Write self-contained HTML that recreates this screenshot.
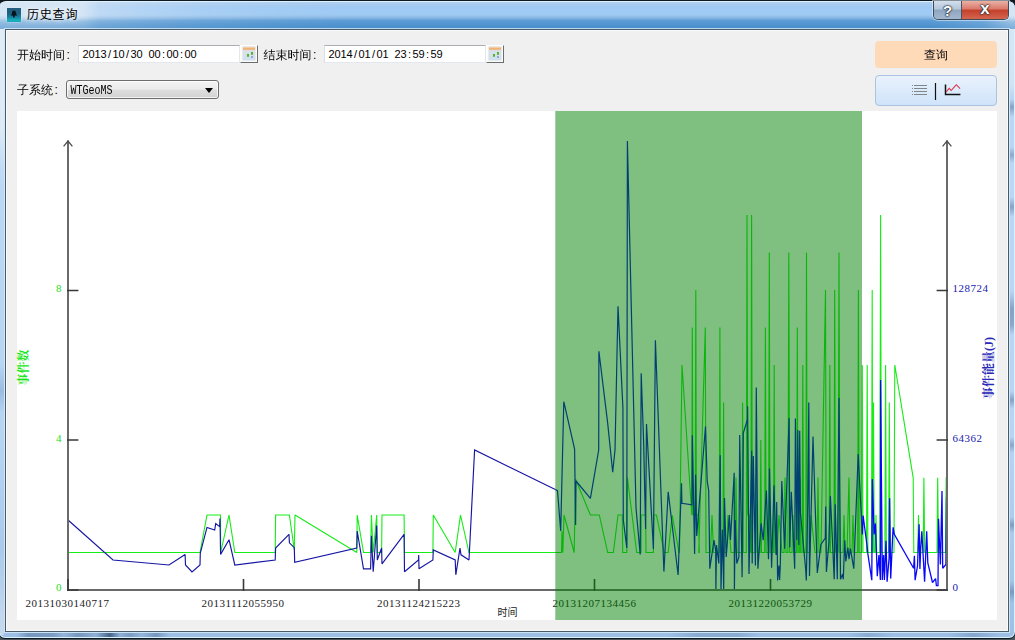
<!DOCTYPE html>
<html lang="zh-CN">
<head>
<meta charset="utf-8">
<title>历史查询</title>
<style>
html,body{margin:0;padding:0}
body{width:1015px;height:640px;position:relative;overflow:hidden;background:linear-gradient(180deg,#12181d 0,#1a2228 30%,#3c464d 97%,#4a545b 100%);font-family:"Liberation Sans","Noto Sans CJK SC",sans-serif;font-size:12px;color:#000}
.abs{position:absolute}
.win{position:absolute;left:-2px;top:0;width:1018px;height:639px;box-sizing:border-box;border:1px solid #0e1822;border-radius:8px 8px 7px 7px;
 background:linear-gradient(180deg,#b9d6f3 0,#b9d6f3 30px,#bad7f5 200px,#b7d5f3 430px,#a9c9ea 560px,#9dbfe6 100%);
 box-shadow:inset 0 0 0 1px rgba(222,243,255,.95);overflow:hidden}
.tbar{position:absolute;left:0;top:1px;width:1016px;height:27px;
 background:linear-gradient(180deg,#b2d0ee 0,#a1c9f2 4px,#9ecbf6 9px,#a0c9f1 13px,#86b6e4 16px,#5e9dd5 18.5px,#5497d2 21px,#4a8fcb 26px,#4a8fcb 100%)}
.tglass{position:absolute;left:0;top:1px;width:1016px;height:27px;
 background:linear-gradient(90deg,rgba(226,236,245,.8) 0,rgba(226,236,245,.78) 84px,rgba(220,233,246,.5) 100px,rgba(214,230,246,.38) 140px,rgba(205,226,246,.22) 200px,rgba(200,222,243,.1) 270px,rgba(190,215,240,0) 350px,rgba(190,215,240,0) 930px,rgba(205,222,240,.35) 985px,rgba(222,234,246,.85) 1012px);
 -webkit-mask-image:linear-gradient(180deg,#000 0,#000 50%,rgba(0,0,0,.55) 75%,rgba(0,0,0,.4) 100%);mask-image:linear-gradient(180deg,#000 0,#000 50%,rgba(0,0,0,.55) 75%,rgba(0,0,0,.4) 100%)}
.client{position:absolute;left:6px;top:28px;width:1004px;height:603px;box-sizing:border-box;border:1px solid #4c5966;background:#f0f0f0;
 box-shadow:0 0 0 1px rgba(214,236,252,.8), inset 0 0 0 1px #f9fcff}
.ticon{position:absolute;left:7px;top:8px;width:14px;height:13.5px;background:linear-gradient(180deg,#245c7c 0,#1b5f82 40%,#178aa8 70%,#18b4b6 88%,#1c9fcc 100%);box-shadow:0 0 1.5px rgba(235,245,250,.9)}
.ttext{position:absolute;left:27px;top:7.2px;height:16px;line-height:16px;font-size:12px;letter-spacing:.8px;color:#000;white-space:nowrap;text-shadow:0 0 5px rgba(255,255,255,.9),0 0 8px rgba(255,255,255,.7)}
.capbtns{position:absolute;left:933px;top:1px;width:76px;height:19px;box-sizing:border-box;border:1px solid #3f4a58;border-top:none;border-radius:0 0 5px 5px;overflow:hidden;box-shadow:0 0 0 1px rgba(230,242,252,.55)}
.cb{position:absolute;top:0;height:18px;text-align:center;color:#fff;font-weight:700;text-shadow:0 0 2px #1a2330,0 0 1.5px #1a2330,0 0 1px #000}
.cb.help{left:0;width:27px;font-size:15px;line-height:19px;background:linear-gradient(180deg,#d3dfec 0,#b5c6d9 45%,#8fa5bf 50%,#a3b8cf 100%);border-right:1px solid #4a5563}
.cb.close{left:28px;width:46px;font-size:17px;line-height:15px;background:linear-gradient(180deg,#eab1a4 0,#d9786a 45%,#c4402c 50%,#d4654f 100%)}
.lbl{position:absolute;height:14px;line-height:14px;font-size:12px;white-space:nowrap;font-family:"Liberation Sans","WenQuanYi Zen Hei","Noto Sans CJK SC",sans-serif;color:#000}
.inp{position:absolute;height:18px;width:162px;box-sizing:border-box;background:#fff;border:1px solid #e3e7ee;border-top-color:#abadb3;border-left-color:#dcdfe6;
 font-family:"Liberation Sans",sans-serif;font-size:11px;letter-spacing:-0.12px;line-height:16px;padding-left:3.6px;white-space:pre;color:#000}
.inp i{display:inline-block;width:6px;text-align:center;letter-spacing:0;font-style:normal}
.cal{position:absolute;width:18px;height:18px;box-sizing:border-box;background:#fbfbfa;border:1px solid #fff;border-right-color:#6a6d70;border-bottom-color:#6a6d70}
.cal i{position:absolute;left:2px;top:1px;width:12px;height:12.5px;background:linear-gradient(180deg,#f6d9b8 0,#f1b27a 1.5px,#efc08f 3px,#d8e2ec 3.6px,#cfe0f0 100%);box-shadow:0 0 0 .5px #d4d9de}
.cal b{position:absolute;width:2.4px;height:3px;background:#59b221;border-radius:0 0 1px 1px}
.cal em{position:absolute;left:10.4px;top:10px;width:2px;height:2.4px;background:#9aa6d8}
.combo{position:absolute;left:66px;top:80px;width:153px;height:19px;box-sizing:border-box;border:1px solid #6e6e6e;border-radius:3px;
 background:linear-gradient(180deg,#f4f4f4 0,#ececec 45%,#dedede 55%,#d2d2d2 100%);box-shadow:inset 0 0 0 1px rgba(255,255,255,.75);
 font-family:"Liberation Mono",monospace;font-size:10px;letter-spacing:0;line-height:17px;padding-left:3.5px;color:#000}
.combo span{display:inline-block;position:relative;top:2px;transform:scale(1,1.3);transform-origin:0 62%}
.combo:after{content:"";position:absolute;left:138px;top:7px;border:4px solid transparent;border-top:5px solid #000;border-bottom:none}
.qbtn{position:absolute;left:875px;top:41px;width:122px;height:27px;border-radius:4px;background:#ffdab9;text-align:center;line-height:29px;font-size:12px;font-family:"Liberation Sans","WenQuanYi Zen Hei","Noto Sans CJK SC",sans-serif}
.vbtn{position:absolute;left:875px;top:75px;width:122px;height:31px;box-sizing:border-box;border:1px solid #a9c3e0;border-radius:4px;background:linear-gradient(180deg,#e9f2fc 0,#dcebfb 50%,#cfe3fa 100%)}
.plot{position:absolute;left:17px;top:111px;width:980px;height:509px;background:#fff}
.chart{position:absolute;left:0;top:0}
.lbl u{text-decoration:none;margin-left:1.5px}
.lb{position:absolute;left:0;top:29px;width:4px;height:606px;background:linear-gradient(180deg,rgba(232,240,247,.85) 0,rgba(230,239,247,.8) 100px,rgba(220,234,248,.3) 135px,rgba(200,225,250,0) 160px,rgba(120,160,205,0) 335px,rgba(110,150,200,.4) 362px,rgba(120,160,205,0) 385px,rgba(220,232,244,0) 520px,rgba(222,232,243,.55) 585px,rgba(222,232,243,.6) 100%)}
.rb{position:absolute;left:1010px;top:29px;width:4px;height:606px;background:linear-gradient(180deg,rgba(225,237,248,.7) 0,rgba(225,237,248,.6) 55px,rgba(200,225,250,0) 68px,
 rgba(70,100,140,0) 70px,rgba(70,100,140,.45) 78px,rgba(70,100,140,0) 88px,
 rgba(70,100,140,0) 118px,rgba(70,100,140,.4) 126px,rgba(70,100,140,0) 134px,
 rgba(70,100,140,0) 168px,rgba(70,100,140,.45) 178px,rgba(70,100,140,0) 188px,
 rgba(70,100,140,0) 262px,rgba(70,100,140,.45) 280px,rgba(70,100,140,.4) 296px,rgba(70,100,140,0) 306px,
 rgba(70,100,140,0) 362px,rgba(70,100,140,.45) 371px,rgba(70,100,140,0) 380px,
 rgba(70,100,140,0) 408px,rgba(70,100,140,.4) 416px,rgba(70,100,140,0) 424px,
 rgba(70,100,140,0) 488px,rgba(70,100,140,.45) 496px,rgba(70,100,140,0) 504px,
 rgba(70,100,140,0) 552px,rgba(70,100,140,.45) 563px,rgba(70,100,140,0) 574px,rgba(70,100,140,0) 100%)}
.bb{position:absolute;left:8px;top:633px;width:1000px;height:4px;background:linear-gradient(90deg,rgba(60,90,130,0) 0,rgba(60,90,130,0) 8px,rgba(60,90,130,.4) 20px,rgba(60,90,130,.35) 45px,rgba(60,90,130,.1) 56px,rgba(60,90,130,.4) 70px,rgba(60,90,130,.15) 88px,rgba(40,70,105,.75) 102px,rgba(60,90,130,.15) 112px,rgba(60,90,130,.35) 122px,rgba(60,90,130,.1) 134px,rgba(60,90,130,.4) 148px,rgba(60,90,130,0) 162px,
 rgba(60,90,130,0) 660px,rgba(60,90,130,.2) 690px,rgba(60,90,130,.2) 730px,rgba(60,90,130,0) 750px,rgba(60,90,130,0) 840px,rgba(60,90,130,.2) 860px,rgba(60,90,130,0) 885px,rgba(60,90,130,0) 940px,rgba(60,90,130,.25) 965px,rgba(60,90,130,0) 992px)}

</style>
</head>
<body>
<div class="win">
 <div class="tbar"></div><div class="tglass"></div>
</div>
<div class="lb"></div><div class="rb"></div><div class="bb"></div>
<div class="client" style="left:5px;top:29px"></div>
<div class="ticon"><svg width="14" height="14" viewBox="0 0 14 14"><path d="M5.4 2.8H8.4L9 5.4L10.2 7.4H7.9L7.4 9.6H6.2L5.8 7.4H3.8L5 5.4Z" fill="#06121a"/></svg></div>
<div class="ttext">历史查询</div>
<div class="capbtns"><div class="cb help">?</div><div class="cb close">x</div></div>

<div class="lbl" style="left:17px;top:48px">开始时间<u>:</u></div>
<div class="inp" style="left:78px;top:45px">2013<i>/</i>10<i>/</i>30<i> </i>00<i>:</i>00<i>:</i>00</div>
<div class="cal" style="left:240px;top:45px"><i></i><b style="left:5.6px;top:8px"></b><b style="left:9.6px;top:6px"></b><em></em></div>
<div class="lbl" style="left:263.5px;top:48px">结束时间<u>:</u></div>
<div class="inp" style="left:324px;top:45px">2014<i>/</i>01<i>/</i>01<i> </i>23<i>:</i>59<i>:</i>59</div>
<div class="cal" style="left:486px;top:45px"><i></i><b style="left:5.6px;top:8px"></b><b style="left:9.6px;top:6px"></b><em></em></div>
<div class="lbl" style="left:17px;top:83px">子系统<u>:</u></div>
<div class="combo"><span>WTGeoMS</span></div>
<div class="qbtn">查询</div>
<div class="vbtn"><svg width="120" height="29" viewBox="0 0 120 29" style="position:absolute;left:0;top:0">
 <g stroke="#80868e" stroke-width="1" fill="none"><path d="M38 9.5H51M38 12.5H51M38 15.5H51M38 18.5H51"/></g>
 <g fill="#8a8a8a"><rect x="36" y="9" width="1" height="1"/><rect x="36" y="12" width="1" height="1"/><rect x="36" y="15" width="1" height="1"/><rect x="36" y="18" width="1" height="1"/></g>
 <path d="M59.5 7V24" stroke="#111" stroke-width="1.2"/>
 <path d="M69.5 8.4V18.6H84.4" stroke="#111" stroke-width="1.5" fill="none"/>
 <path d="M70.2 15.8L73.2 12.3L75.2 14.5L77.7 11.6L80.3 8.7L84.1 12.6" stroke="#dc3046" stroke-width="1.05" fill="none"/>
</svg></div>
<div class="plot"></div>
<svg class="chart" width="1015" height="640" viewBox="0 0 1015 640">
<g fill="none" stroke-linejoin="miter" stroke-miterlimit="2">
<polyline stroke="#16ec16" stroke-width="1.1" points="68.0,552.5 200.0,552.5 207.0,515.0 220.5,515.0 220.7,552.5 229.0,515.0 234.8,552.5 275.2,552.5 275.6,515.0 289.4,515.0 294.3,550.0 295.0,515.0 356.8,552.5 357.2,515.0 363.5,552.5 370.6,552.5 371.4,515.0 373.2,552.5 376.7,515.0 377.3,552.5 381.6,552.5 382.0,515.0 404.1,515.0 404.5,552.5 432.9,552.5 433.3,515.0 455.2,552.5 460.5,515.0 469.0,552.5 561.5,552.5 562.0,531.0 562.8,552.5 564.0,515.0 574.2,552.5 575.5,479.0 590.4,515.0 599.3,515.0 607.7,552.5 613.4,552.5 618.0,515.0 622.3,515.0 622.7,552.5 626.8,552.5 627.4,477.5 636.7,552.5 641.0,552.5 641.2,515.0 645.6,515.0 646.0,552.5 653.4,552.5 653.8,515.0 656.4,515.0 664.3,552.5 668.2,552.5 672.2,515.0 679.0,552.5 679.5,552.5 682.0,365.0 691.8,515.0 691.8,515.0 692.3,327.5 693.0,515.0 695.2,515.0 695.8,290.0 696.4,515.0 698.0,515.0 698.5,515.0 699.3,552.5 698.8,552.5 705.3,327.5 706.0,552.5 710.5,552.5 712.0,515.0 713.5,552.5 719.2,552.5 719.9,327.5 720.6,552.5 723.0,552.5 723.6,402.5 724.2,552.5 726.5,552.5 728.0,515.0 731.0,552.5 735.0,552.5 736.0,477.5 737.0,552.5 741.9,552.5 742.6,402.5 743.3,552.5 746.3,552.5 747.0,215.0 747.7,515.0 749.0,515.0 749.5,515.0 750.1,552.5 750.9,552.5 751.6,215.0 752.3,552.5 755.0,552.5 756.0,477.5 757.0,552.5 760.1,552.5 760.8,440.0 761.5,552.5 764.7,552.5 765.4,327.5 766.1,552.5 768.6,552.5 769.3,252.5 770.0,552.5 773.5,552.5 774.2,365.0 774.9,552.5 777.0,552.5 779.0,515.0 782.0,552.5 784.0,552.5 785.0,477.5 786.0,552.5 787.9,552.5 788.8,252.5 789.7,552.5 792.0,552.5 793.0,515.0 794.0,552.5 796.6,552.5 797.3,327.5 798.0,552.5 799.3,552.5 800.0,477.5 800.7,552.5 802.1,552.5 802.8,365.0 803.5,552.5 805.8,552.5 806.5,252.5 807.2,552.5 810.0,552.5 811.0,515.0 815.0,552.5 817.0,552.5 818.0,477.5 819.0,552.5 821.0,552.5 825.5,290.0 826.2,552.5 829.1,552.5 829.8,365.0 830.5,552.5 834.0,552.5 834.7,290.0 835.4,552.5 838.1,552.5 839.0,252.5 839.9,552.5 843.0,552.5 844.0,515.0 845.0,552.5 847.0,552.5 849.0,477.5 850.0,552.5 852.0,552.5 853.0,515.0 854.0,552.5 857.7,552.5 858.4,290.0 859.1,552.5 861.6,552.5 862.3,365.0 863.0,552.5 866.5,552.5 867.2,365.0 867.9,552.5 871.5,552.5 872.2,290.0 872.7,552.5 873.0,552.5 873.5,402.5 874.2,552.5 875.3,552.5 876.0,515.0 876.7,552.5 879.8,552.5 880.6,215.0 881.4,552.5 884.9,552.5 885.6,365.0 886.3,552.5 888.6,552.5 889.3,402.5 890.0,552.5 894.0,552.5 894.8,365.0 913.2,477.8 913.8,552.5 917.7,552.5 918.5,515.0 919.3,552.5 923.2,552.5 923.9,477.8 924.7,552.5 937.0,552.5 937.7,477.8 938.5,552.5 945.5,552.5 946.2,477.8 947.0,477.8"/>
<polyline stroke="#1616a4" stroke-width="1.15" points="68.0,520.0 113.0,560.0 169.0,565.0 185.1,554.6 185.5,565.0 192.0,572.0 200.0,565.0 200.3,553.0 207.0,527.4 214.7,530.0 215.7,523.5 219.6,526.6 220.0,518.6 220.6,554.4 229.0,539.7 234.8,565.0 275.2,560.0 275.6,548.0 289.0,534.3 289.4,542.8 294.3,547.7 294.7,562.3 356.8,548.1 357.2,531.0 363.5,568.8 370.6,568.8 371.4,535.7 373.2,571.8 376.7,525.5 377.3,560.0 381.6,548.0 382.0,563.9 404.1,534.3 404.5,571.8 418.5,560.0 418.7,555.0 419.0,568.8 432.9,560.0 433.3,550.0 455.2,560.0 455.8,574.8 460.0,548.2 461.0,554.8 469.0,560.0 474.6,450.0 555.3,489.5"/>
<polyline stroke="#0000e6" stroke-width="1.2" points="555.3,489.5 557.5,490.6 560.7,531.0 563.8,401.7 574.6,449.0 575.6,525.0 576.0,481.0 590.4,498.3 598.7,450.0 598.9,351.2 607.7,423.4 612.7,472.2 615.0,450.0 618.0,306.2 622.9,407.6 623.3,520.0 626.8,548.0 627.4,141.0 636.0,508.0 640.2,554.5 641.2,373.2 643.6,441.0 645.6,529.0 646.5,424.0 653.4,549.0 655.4,340.3 663.9,571.6 668.2,491.8 678.1,575.0 681.5,483.2 681.9,503.3 692.0,504.8 692.3,435.2 694.6,554.0 695.6,474.8 696.7,536.0 705.5,426.5 707.2,481.0 708.7,490.6 709.8,568.7 714.0,540.2 715.7,550.8 715.9,589.8 716.5,545.0 718.8,563.5 720.2,455.2 721.0,589.8 722.4,529.7 723.7,589.8 724.5,498.0 726.2,557.0 729.4,515.0 730.5,540.0 734.2,472.7 734.4,589.8 735.2,520.0 736.8,563.5 738.9,557.0 739.7,435.0 742.1,577.2 743.3,433.0 747.6,419.0 747.6,406.3 749.0,574.0 750.5,508.6 751.7,450.8 752.2,563.5 753.3,456.0 755.4,565.6 756.3,387.5 757.9,568.7 761.1,523.3 763.2,540.2 766.4,490.6 768.5,559.2 769.5,468.4 771.6,567.7 774.0,485.3 776.1,555.0 776.7,502.0 777.6,580.4 778.9,565.6 779.6,580.0 780.3,565.6 781.8,481.0 784.6,548.7 789.1,418.1 789.8,547.6 791.3,491.7 794.7,568.7 795.4,418.6 796.8,540.0 797.8,430.0 798.8,545.0 799.7,430.8 800.4,512.8 805.7,569.8 806.3,580.4 807.8,502.0 808.8,402.4 809.5,576.0 813.0,436.6 817.3,573.0 820.9,544.5 825.3,538.0 825.7,506.5 826.4,572.0 828.9,542.3 830.4,496.0 834.2,579.3 835.2,504.3 837.3,579.3 839.0,398.0 840.5,579.3 842.6,574.0 843.3,579.3 844.7,540.2 845.8,561.4 847.9,547.6 849.0,559.2 850.4,548.7 853.8,568.7 858.2,454.0 860.6,502.0 862.0,530.0"/>
<polyline stroke="#0808f8" stroke-width="1.3" points="862.0,530.0 862.3,534.4 863.1,515.5 867.0,545.5 867.8,553.4 871.8,580.2 872.3,479.0 874.1,534.4 875.4,523.4 877.3,576.2 878.9,555.0 880.4,580.0 880.6,380.0 882.3,580.0 883.6,555.0 884.4,580.0 886.0,540.7 887.1,581.7 889.1,558.0 889.6,498.2 890.7,578.6 893.1,527.3 894.3,534.4 913.6,568.3 914.4,555.7 915.1,580.2 917.5,566.0 919.1,524.2 919.9,569.0 920.7,548.6 921.8,531.3 924.6,581.7 926.7,531.3 927.8,562.8 932.5,582.5 935.6,578.6 936.4,585.7 938.0,585.7 938.5,518.7 940.4,564.4 942.0,491.0 942.7,568.3 945.9,564.4 946.5,498.0 947.0,498.0"/>
</g>
<g stroke="#6a6a6a" stroke-width="2" fill="none">
<path d="M68 140.5V591"/>
<path d="M947 140.5V591"/>
<path d="M67 590H948"/>
</g>
<g stroke="#4a4a4a" stroke-width="1.2" fill="none">
<path d="M63.6 146.4L68 141L72.4 146.4"/>
<path d="M942.6 146.4L947 141L951.4 146.4"/>
</g>
<g stroke="#383838" stroke-width="1.6" fill="none">
<path d="M67 290.5H78.4M67 440H78.4M67 590H78.4"/>
<path d="M936.6 290.5H948M936.6 440H948M936.6 590H948"/>
<path d="M68 579V591M243.5 579V591M419 579V591M594.5 579V591M770.5 579V591"/>
</g>
<g font-family="'Liberation Serif', serif" font-size="11px" letter-spacing="0.5" fill="#1c1c1c" text-anchor="middle">
<text x="67.5" y="607">20131030140717</text>
<text x="243" y="607">20131112055950</text>
<text x="418.7" y="607">20131124215223</text>
<text x="594.5" y="607">20131207134456</text>
<text x="770.5" y="607">20131220053729</text>
</g>
<g font-family="'Liberation Serif', serif" font-size="11px" letter-spacing="0.5" fill="#22e022" text-anchor="end">
<text x="62" y="292">8</text>
<text x="62" y="442">4</text>
<text x="62" y="591">0</text>
</g>
<g font-family="'Liberation Serif', serif" font-size="11px" letter-spacing="0.5" fill="#2020b0">
<text x="952.5" y="292">128724</text>
<text x="952.5" y="442">64362</text>
<text x="952.5" y="591">0</text>
</g>
<text x="507.5" y="616" text-anchor="middle" font-family="'Liberation Sans','Noto Sans CJK SC',sans-serif" font-size="10px" fill="#222">时间</text>
<text transform="translate(27.8 367.5) rotate(-90)" text-anchor="middle" font-family="'Liberation Serif','Noto Serif CJK SC',serif" font-weight="700" font-size="12px" fill="#19e619">事件数</text>
<text transform="translate(992.6 368) rotate(-90)" text-anchor="middle" font-family="'Liberation Serif','Noto Serif CJK SC',serif" font-weight="700" font-size="12px" fill="#2a2ab8">事件能量(J)</text>
<rect x="555.3" y="111" width="306.7" height="509" fill="rgba(0,128,0,0.5)"/>
</svg>

</body>
</html>
